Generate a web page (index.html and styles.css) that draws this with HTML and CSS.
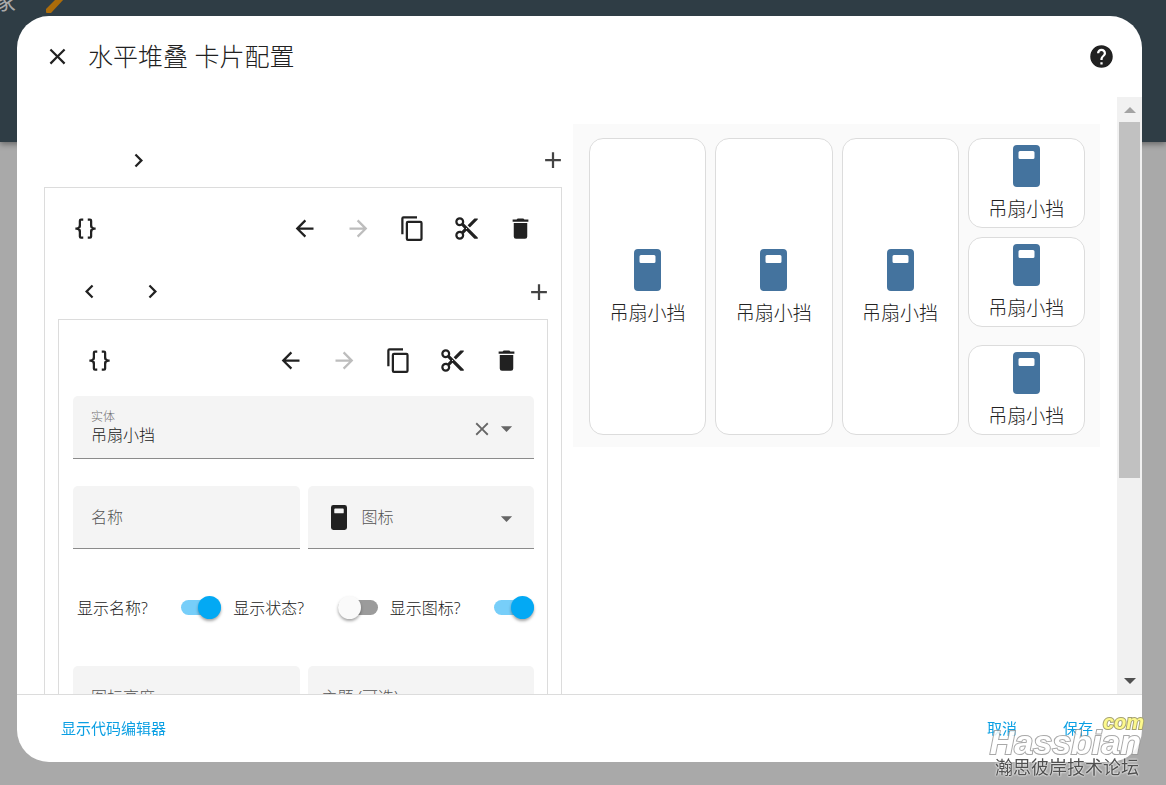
FILE: index.html
```html
<!DOCTYPE html>
<html lang="zh-CN">
<head>
<meta charset="utf-8">
<meta name="viewport" content="width=device-width, initial-scale=1">
<title>水平堆叠 卡片配置</title>
<link rel="stylesheet" href="styles.css">
</head>
<body>
<svg class="sprite" aria-hidden="true">
  <symbol id="close" viewBox="0 0 24 24"><path d="M19,6.41L17.59,5L12,10.59L6.41,5L5,6.41L10.59,12L5,17.59L6.41,19L12,13.41L17.59,19L19,17.59L13.41,12L19,6.41Z"/></symbol>
  <symbol id="help" viewBox="0 0 24 24"><path d="M15.07,11.25L14.17,12.17C13.45,12.89 13,13.5 13,15H11V14.5C11,13.39 11.45,12.39 12.17,11.67L13.41,10.41C13.78,10.05 14,9.55 14,9C14,7.89 13.1,7 12,7A2,2 0 0,0 10,9H8A4,4 0 0,1 12,5A4,4 0 0,1 16,9C16,9.88 15.64,10.67 15.07,11.25M13,19H11V17H13M12,2A10,10 0 0,0 2,12A10,10 0 0,0 12,22A10,10 0 0,0 22,12C22,6.47 17.5,2 12,2Z"/></symbol>
  <symbol id="chev-left" viewBox="0 0 24 24"><path d="M15.41,16.58L10.83,12L15.41,7.41L14,6L8,12L14,18L15.41,16.58Z"/></symbol>
  <symbol id="chev-right" viewBox="0 0 24 24"><path d="M8.59,16.58L13.17,12L8.59,7.41L10,6L16,12L10,18L8.59,16.58Z"/></symbol>
  <symbol id="plus" viewBox="4 4 16 16"><path d="M19,13H13V19H11V13H5V11H11V5H13V11H19V13Z"/></symbol>
  <symbol id="braces" viewBox="0 0 24 24"><path d="M8,3A2,2 0 0,0 6,5V9A2,2 0 0,1 4,11H3V13H4A2,2 0 0,1 6,15V19A2,2 0 0,0 8,21H10V19H8V14A2,2 0 0,0 6,12A2,2 0 0,0 8,10V5H10V3M16,3A2,2 0 0,1 18,5V9A2,2 0 0,0 20,11H21V13H20A2,2 0 0,0 18,15V19A2,2 0 0,1 16,21H14V19H16V14A2,2 0 0,1 18,12A2,2 0 0,1 16,10V5H14V3H16Z"/></symbol>
  <symbol id="arrow-left" viewBox="0 0 24 24"><path d="M20,11V13H8L13.5,18.5L12.08,19.92L4.16,12L12.08,4.08L13.5,5.5L8,11H20Z"/></symbol>
  <symbol id="arrow-right" viewBox="0 0 24 24"><path d="M4,11V13H16L10.5,18.5L11.92,19.92L19.84,12L11.92,4.08L10.5,5.5L16,11H4Z"/></symbol>
  <symbol id="copy" viewBox="0 0 24 24"><path d="M19,21H8V7H19M19,5H8A2,2 0 0,0 6,7V21A2,2 0 0,0 8,23H19A2,2 0 0,0 21,21V7A2,2 0 0,0 19,5M16,1H4A2,2 0 0,0 2,3V17H4V3H16V1Z"/></symbol>
  <symbol id="cut" viewBox="0 0 24 24"><path d="M19,3L13,9L15,11L22,4V3M12,12.5A0.5,0.5 0 0,1 11.5,12A0.5,0.5 0 0,1 12,11.5A0.5,0.5 0 0,1 12.5,12A0.5,0.5 0 0,1 12,12.5M6,20A2,2 0 0,1 4,18C4,16.89 4.9,16 6,16A2,2 0 0,1 8,18C8,19.11 7.1,20 6,20M6,8A2,2 0 0,1 4,6C4,4.89 4.9,4 6,4A2,2 0 0,1 8,6C8,7.11 7.1,8 6,8M9.64,7.64C9.87,7.14 10,6.59 10,6A4,4 0 0,0 6,2A4,4 0 0,0 2,6A4,4 0 0,0 6,10C6.59,10 7.14,9.87 7.64,9.64L10,12L7.64,14.36C7.14,14.13 6.59,14 6,14A4,4 0 0,0 2,18A4,4 0 0,0 6,22A4,4 0 0,0 10,18C10,17.41 9.87,16.86 9.64,16.36L12,14L19,21H22V20L9.64,7.64Z"/></symbol>
  <symbol id="delete" viewBox="0 0 24 24"><path d="M19,4H15.5L14.5,3H9.5L8.5,4H5V6H19M6,19A2,2 0 0,0 8,21H16A2,2 0 0,0 18,19V7H6V19Z"/></symbol>
  <symbol id="caret" viewBox="0 0 24 24"><path d="M7,10L12,15L17,10H7Z"/></symbol>
  <symbol id="switch" viewBox="0 0 27 42"><path fill-rule="evenodd" d="M4,0H23A4,4 0 0,1 27,4V38A4,4 0 0,1 23,42H4A4,4 0 0,1 0,38V4A4,4 0 0,1 4,0ZM7,6A1.500,1.500 0 0,0 5.500,7.500V12.500A1.500,1.500 0 0,0 7,14H20A1.500,1.500 0 0,0 21.500,12.500V7.500A1.500,1.500 0 0,0 20,6Z"/></symbol>
  <symbol id="tri-up" viewBox="0 0 12 6"><path d="M0,6L6,0L12,6Z"/></symbol>
  <symbol id="tri-down" viewBox="0 0 12 6"><path d="M0,0L6,6L12,0Z"/></symbol>
</svg>

<header class="app-bar">
  <span class="app-title">家</span>
  <svg class="pencil" viewBox="0 0 20 16" aria-hidden="true"><path d="M0,9L10,-1H18L5,13H1Q0,13 0,12Z"/></svg>
</header>

<div class="overlay">
  <section class="dialog" role="dialog" aria-labelledby="dialog-title">
    <header class="dialog-header">
      <button class="icon-button" aria-label="关闭"><svg class="icon"><use href="#close"/></svg></button>
      <h1 class="dialog-title" id="dialog-title">水平堆叠 卡片配置</h1>
      <button class="icon-button" aria-label="帮助"><svg class="icon"><use href="#help"/></svg></button>
    </header>

    <div class="dialog-body">
      <main class="content">
        <form class="editor">
          <nav class="tabs">
            <button type="button" class="tab-arrow hidden" aria-label="上一个"><svg class="icon"><use href="#chev-left"/></svg></button>
            <button type="button" class="tab-arrow" aria-label="下一个"><svg class="icon"><use href="#chev-right"/></svg></button>
            <button type="button" class="add" aria-label="添加卡片"><svg><use href="#plus"/></svg></button>
          </nav>
          <div class="panel">
            <div class="toolbar">
              <button type="button" class="icon-button code" aria-label="代码"><svg class="icon"><use href="#braces"/></svg></button>
              <button type="button" class="icon-button" aria-label="前移"><svg class="icon"><use href="#arrow-left"/></svg></button>
              <button type="button" class="icon-button" disabled aria-label="后移"><svg class="icon"><use href="#arrow-right"/></svg></button>
              <button type="button" class="icon-button" aria-label="复制"><svg class="icon"><use href="#copy"/></svg></button>
              <button type="button" class="icon-button" aria-label="剪切"><svg class="icon"><use href="#cut"/></svg></button>
              <button type="button" class="icon-button" aria-label="删除"><svg class="icon"><use href="#delete"/></svg></button>
            </div>
            <nav class="tabs nested">
              <button type="button" class="tab-arrow" aria-label="上一个"><svg class="icon"><use href="#chev-left"/></svg></button>
              <button type="button" class="tab-arrow" aria-label="下一个"><svg class="icon"><use href="#chev-right"/></svg></button>
              <button type="button" class="add" aria-label="添加卡片"><svg><use href="#plus"/></svg></button>
            </nav>
            <div class="panel">
              <div class="toolbar">
                <button type="button" class="icon-button code" aria-label="代码"><svg class="icon"><use href="#braces"/></svg></button>
                <button type="button" class="icon-button" aria-label="前移"><svg class="icon"><use href="#arrow-left"/></svg></button>
                <button type="button" class="icon-button" disabled aria-label="后移"><svg class="icon"><use href="#arrow-right"/></svg></button>
                <button type="button" class="icon-button" aria-label="复制"><svg class="icon"><use href="#copy"/></svg></button>
                <button type="button" class="icon-button" aria-label="剪切"><svg class="icon"><use href="#cut"/></svg></button>
                <button type="button" class="icon-button" aria-label="删除"><svg class="icon"><use href="#delete"/></svg></button>
              </div>
              <div class="fields">
                <div class="field">
                  <div class="filled">
                    <label for="entity">实体</label>
                    <input id="entity" type="text" value="吊扇小挡">
                  </div>
                  <button type="button" class="clear" aria-label="清除"><svg><use href="#close"/></svg></button>
                  <svg class="icon caret"><use href="#caret"/></svg>
                </div>
                <div class="row two">
                  <div class="field">
                    <div class="resting">
                      <label for="name">名称</label>
                      <input id="name" type="text">
                    </div>
                  </div>
                  <div class="field with-icon">
                    <svg class="field-icon"><use href="#switch"/></svg>
                    <div class="resting">
                      <label for="icon">图标</label>
                      <select id="icon"><option value=""></option></select>
                    </div>
                    <svg class="icon caret"><use href="#caret"/></svg>
                  </div>
                </div>
                <div class="row three">
                  <label class="toggle">显示名称?<input type="checkbox" checked></label>
                  <label class="toggle">显示状态?<input type="checkbox"></label>
                  <label class="toggle">显示图标?<input type="checkbox" checked></label>
                </div>
                <div class="row two">
                  <div class="field">
                    <div class="resting">
                      <label for="height">图标高度</label>
                      <input id="height" type="text">
                    </div>
                  </div>
                  <div class="field menu">
                    <div class="resting">
                      <label for="theme">主题 (可选)</label>
                      <select id="theme"><option value=""></option></select>
                    </div>
                  </div>
                </div>
              </div>
            </div>
          </div>
        </form>

        <section class="preview" aria-label="预览">
          <button class="card"><svg><use href="#switch"/></svg><span>吊扇小挡</span></button>
          <button class="card"><svg><use href="#switch"/></svg><span>吊扇小挡</span></button>
          <button class="card"><svg><use href="#switch"/></svg><span>吊扇小挡</span></button>
          <div class="stack outer">
            <div class="stack">
              <button class="card"><svg><use href="#switch"/></svg><span>吊扇小挡</span></button>
              <button class="card"><svg><use href="#switch"/></svg><span>吊扇小挡</span></button>
            </div>
            <button class="card"><svg><use href="#switch"/></svg><span>吊扇小挡</span></button>
          </div>
        </section>
      </main>
      <div class="scrollbar" aria-hidden="true">
        <svg class="up"><use href="#tri-up"/></svg>
        <div class="track"><div class="thumb"></div></div>
        <svg class="down"><use href="#tri-down"/></svg>
      </div>
    </div>

    <footer class="dialog-footer">
      <button class="action">显示代码编辑器</button>
      <div class="actions">
        <button class="action">取消</button>
        <button class="action">保存</button>
      </div>
    </footer>
  </section>
</div>

<div class="watermark">
  <span class="wm-com">com</span>
  <span class="wm-name">Hassbian</span>
  <span class="wm-sub">瀚思彼岸技术论坛</span>
</div>
</body>
</html>
```
FILE: styles.css
```css
* {
  box-sizing: border-box;
}

body {
  margin: 0;
  min-height: 100vh;
  overflow: hidden;
  background: #a9a9a9;
  color: #212121;
  font-family: "Noto Sans", "Noto Sans CJK SC", sans-serif;
  font-size: 16px;
  font-weight: 300;
}

button,
input,
select {
  margin: 0;
  padding: 0;
  border: 0;
  background: none;
  color: inherit;
  font: inherit;
  appearance: none;
  outline: none;
}

svg {
  display: block;
  fill: currentColor;
}

.sprite {
  position: absolute;
  width: 0;
  height: 0;
}

.icon {
  width: 27px;
  height: 27px;
}

/* page behind the dialog */
.app-bar {
  display: flex;
  align-items: flex-start;
  gap: 30px;
  height: 142px;
  background: #2f3d45;
  box-shadow: 0 2px 6px rgba(0, 0, 0, 0.4);
}

.app-title {
  margin: -12px 0 0 -6px;
  color: #a9a9a9;
  font-size: 22px;
  font-weight: 400;
  line-height: 24px;
}

.pencil {
  width: 20px;
  height: 16px;
  color: #ac6c0a;
}

/* dialog */
.overlay {
  position: fixed;
  inset: 0;
  display: flex;
  padding: 16px 24px 23px 17px;
}

.dialog {
  display: flex;
  flex: 1;
  flex-direction: column;
  min-width: 0;
  overflow: hidden;
  border-radius: 32px;
  background: #fff;
}

.dialog-header {
  display: flex;
  align-items: center;
  gap: 4px;
  height: 81px;
  padding: 0 14px 0 13px;
}

.dialog-title {
  flex: 1;
  margin: 0;
  padding-bottom: 2px;
  font-size: 25px;
  font-weight: 300;
  line-height: 32px;
}

.icon-button {
  display: flex;
  align-items: center;
  justify-content: center;
  width: 54px;
  height: 54px;
}

.icon-button:disabled {
  color: #bdbdbd;
}

.dialog-body {
  display: flex;
  flex: 1;
  min-height: 0;
}

.content {
  display: grid;
  flex: 1;
  grid-template-columns: 518fr 527fr;
  align-items: start;
  gap: 11px;
  min-width: 0;
  padding: 27px 17px 27px 27px;
  overflow: hidden;
}

/* editor */
.editor {
  padding-top: 9px;
}

.tabs {
  display: flex;
  align-items: center;
  gap: 36px;
  height: 54px;
  padding-left: 18px;
}

.tabs.nested {
  height: 55px;
}

.add {
  margin-left: auto;
  color: #444;
}

.add svg {
  width: 18px;
  height: 18px;
}

.hidden {
  visibility: hidden;
}

.panel {
  padding: 13px;
  border: 1px solid #dcdcdc;
}

.toolbar {
  display: flex;
  margin-bottom: 9px;
  padding-right: 1px;
}

.code {
  margin-right: auto;
}

.fields {
  display: grid;
  gap: 27px;
  padding-left: 1px;
}

.row {
  display: grid;
  gap: 8px;
}

.two {
  grid-template-columns: 1fr 1fr;
}

.three {
  grid-template-columns: 1fr 1fr 1fr;
}

.field {
  display: flex;
  align-items: center;
  min-width: 0;
  height: 63px;
  padding: 0 14px 0 18px;
  border-bottom: 1px solid #8b8b8b;
  border-radius: 5px 5px 0 0;
  background: #f4f4f4;
}

.field.menu {
  padding-left: 14px;
}

.with-icon {
  gap: 15px;
  padding-left: 23px;
}

.field-icon {
  width: 16px;
  height: 25px;
}

.filled {
  display: grid;
  flex: 1;
  min-width: 0;
}

.filled label {
  color: #6f6f6f;
  font-size: 12px;
  line-height: 16px;
}

.filled input {
  width: 100%;
  height: 20px;
  line-height: 20px;
}

.resting {
  display: grid;
  flex: 1;
  align-items: center;
  min-width: 0;
}

.resting > * {
  grid-area: 1 / 1;
  width: 100%;
  line-height: 24px;
}

.resting label {
  color: #555;
}

.clear,
.caret {
  margin-top: 3px;
  color: #666;
}

.clear svg {
  width: 22px;
  height: 22px;
}

.toggle {
  display: flex;
  align-items: center;
  justify-content: space-between;
  height: 63px;
  padding-left: 4px;
  line-height: 24px;
}

.toggle input {
  position: relative;
  display: flex;
  align-items: center;
  width: 40px;
  height: 23px;
}

.toggle input::before {
  width: 40px;
  height: 15px;
  border-radius: 8px;
  background: #9b9b9b;
  content: "";
}

.toggle input::after {
  position: absolute;
  left: 0;
  width: 23px;
  height: 23px;
  border-radius: 50%;
  background: #fafafa;
  box-shadow: 0 2px 3px rgba(0, 0, 0, 0.35);
  content: "";
}

.toggle input:checked::before {
  background: #77cef9;
}

.toggle input:checked::after {
  right: 0;
  left: auto;
  background: #03a9f4;
}

/* card preview */
.preview {
  display: grid;
  grid-template-columns: repeat(4, 1fr);
  gap: 9px;
  padding: 14px 15px 12px 16px;
  background: #fafafa;
}

.card {
  display: flex;
  flex-direction: column;
  align-items: center;
  justify-content: center;
  gap: 9px;
  min-width: 0;
  padding: 6px 0 5px;
  border: 1px solid #dcdcdc;
  border-radius: 14px;
  background: #fff;
  font-size: 19px;
  line-height: 26px;
}

.card svg {
  width: 27px;
  height: 42px;
  color: #44739e;
}

.stack {
  display: grid;
  gap: 9px;
}

.stack.outer {
  gap: 18px;
}

/* scrollbar */
.scrollbar {
  display: flex;
  flex-direction: column;
  align-items: center;
  width: 25px;
  padding: 10px 0;
  background: #f1f1f1;
}

.scrollbar svg {
  width: 12px;
  height: 6px;
}

.up {
  color: #a3a3a3;
}

.down {
  color: #505050;
}

.track {
  flex: 1;
  width: 21px;
  margin: 9px 0;
}

.thumb {
  height: 65%;
  background: #c1c1c1;
}

/* footer */
.dialog-footer {
  display: flex;
  align-items: center;
  justify-content: space-between;
  height: 68px;
  padding: 0 49px 2px 44px;
  border-top: 1px solid #dcdcdc;
}

.actions {
  display: flex;
  gap: 46px;
}

.action {
  color: #0a9fe3;
  font-size: 15px;
  font-weight: 400;
  line-height: 24px;
}

/* forum mark */
.watermark {
  position: fixed;
  right: 22px;
  bottom: 5px;
  display: grid;
  justify-items: end;
  font-family: "Liberation Sans", "Noto Sans CJK SC", sans-serif;
  font-weight: 700;
}

.wm-com {
  color: #fdf98c;
  font-size: 20px;
  font-style: italic;
  line-height: 12px;
  paint-order: stroke fill;
  -webkit-text-stroke: 2px #a5a272;
}

.wm-name {
  padding-right: 3px;
  color: #fff;
  font-size: 34px;
  font-style: italic;
  line-height: 28px;
  opacity: 0.85;
  paint-order: stroke fill;
  -webkit-text-stroke: 2px #999;
}

.wm-sub {
  padding-right: 5px;
  color: #505050;
  font-size: 18px;
  font-weight: 400;
  line-height: 24px;
  text-shadow: 0 0 2px #fff, 0 0 2px #fff;
}
```
